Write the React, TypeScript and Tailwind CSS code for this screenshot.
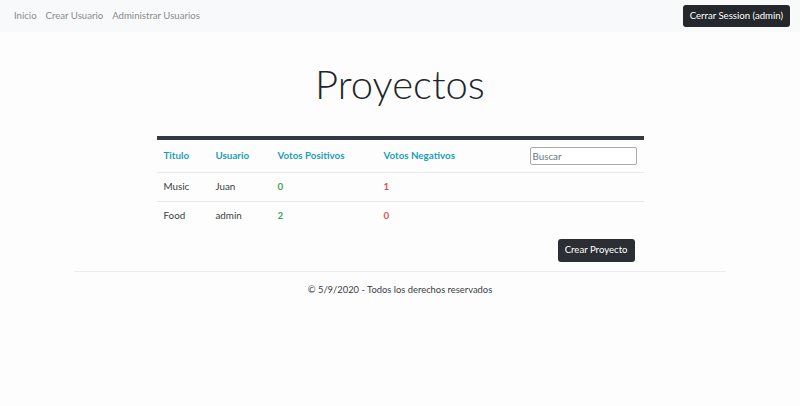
import React from "react";

const projects = [
  { titulo: "Music", usuario: "Juan", positivos: 0, negativos: 1 },
  { titulo: "Food", usuario: "admin", positivos: 2, negativos: 0 },
];

export default function App() {
  return (
    <div
      className="min-h-[406px] bg-[#fdfdfe] text-[#212529]"
      style={{ fontFamily: 'Lato, "Open Sans", sans-serif' }}
    >
      <nav className="flex h-8 items-center justify-between bg-[#f8f9fa] pl-[14px] pr-[10px]">
        <div className="flex gap-[9px] text-[9.6px] text-[#8a8b8c]">
          <span>Inicio</span>
          <span>Crear Usuario</span>
          <span>Administrar Usuarios</span>
        </div>
        <button className="h-[22px] rounded-[3px] bg-[#24272b] px-[7px] text-[9.6px] text-white">
          Cerrar Session (admin)
        </button>
      </nav>

      <div className="mx-auto w-[650px]">
        <h1 className="mt-[28px] text-center text-[40px] font-light leading-[48px] text-[#212529]">
          Proyectos
        </h1>

        <div className="mx-auto mt-[28px] w-[487px]">
          <table className="w-full table-fixed border-t-[4px] border-[#343a40] text-left text-[9.8px]">
            <colgroup>
              <col className="w-[52px]" />
              <col className="w-[62px]" />
              <col className="w-[106px]" />
              <col className="w-[146px]" />
              <col />
            </colgroup>
            <thead>
              <tr className="h-[34px] border-b border-[#e6e8ea] text-[#1a9fb6]">
                <th className="pl-[7px] font-bold">Titulo</th>
                <th className="pl-[7px] font-bold">Usuario</th>
                <th className="pl-[7px] font-bold">Votos Positivos</th>
                <th className="pl-[7px] font-bold">Votos Negativos</th>
                <th className="pl-[7px]">
                  <input
                    placeholder="Buscar"
                    className="h-[18px] w-[107px] rounded-[2px] border border-[#a9abad] bg-white px-[2px] text-[9.8px] font-normal text-[#333] outline-none placeholder:text-[#6c757d]"
                  />
                </th>
              </tr>
            </thead>
            <tbody>
              {projects.map((p) => (
                <tr key={p.titulo} className="h-[29px] border-b border-[#e6e8ea] last:border-b-0">
                  <td className="pl-[7px] text-[#3a3d40]">{p.titulo}</td>
                  <td className="pl-[7px] text-[#3a3d40]">{p.usuario}</td>
                  <td className="pl-[7px] font-bold text-[#3aa655]">{p.positivos}</td>
                  <td className="pl-[7px] font-bold text-[#d9534f]">{p.negativos}</td>
                  <td></td>
                </tr>
              ))}
            </tbody>
          </table>
          <div className="mt-[9px] flex justify-end pr-[9px]">
            <button className="h-[23px] rounded-[3px] bg-[#2b2f33] px-[7px] text-[9.6px] text-white">
              Crear Proyecto
            </button>
          </div>
        </div>

        <hr className="mt-[9px] border-[#e9ecef]" />
        <p className="mt-[11px] text-center text-[9.4px] text-[#3a3d40]">
          © 5/9/2020 - Todos los derechos reservados
        </p>
      </div>
    </div>
  );
}
